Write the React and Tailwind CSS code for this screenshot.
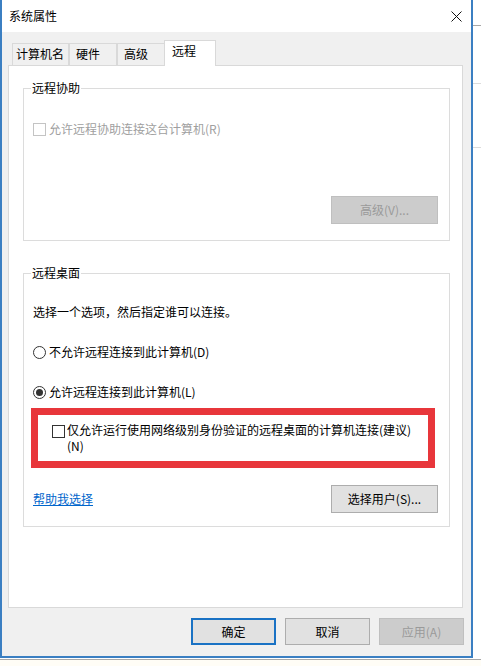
function Checkbox({ disabled }) {
  return (
    <span
      className={
        "inline-block w-[13px] h-[13px] border shrink-0 bg-white " +
        (disabled ? "border-[#c4c4c4]" : "border-[#333333]")
      }
    />
  );
}

function Radio({ checked }) {
  return (
    <span className="w-[13px] h-[13px] rounded-full border border-[#333333] bg-white flex items-center justify-center shrink-0">
      {checked && <span className="w-[7px] h-[7px] rounded-full bg-[#333333]" />}
    </span>
  );
}

export default function App() {
  return (
    <div className="w-[481px] h-[666px] bg-[#fffdf9] flex flex-col overflow-hidden font-['Noto_Sans_CJK_SC',sans-serif] text-[12px] leading-[16px] text-black">
      <div className="flex h-[658px]">
        {/* window */}
        <div className="w-[473px] h-full flex flex-col border-x-2 border-b-2 border-[#3b7fc2] bg-[#f0f0f0]">
          {/* title bar */}
          <div className="h-[32px] bg-white flex items-center justify-between pl-[7px] pr-[9px] shrink-0">
            <span>系统属性</span>
            <svg width="11" height="11" viewBox="0 0 11 11">
              <path d="M0.5 0.5L10.5 10.5M10.5 0.5L0.5 10.5" stroke="#111" strokeWidth="1" />
            </svg>
          </div>

          {/* tabs */}
          <div className="h-[34px] -mb-px flex items-end pl-[10px] relative z-10 shrink-0">
            <div className="w-[57px] h-[23px] border border-[#d9d9d9] bg-[#f0f0f0] pl-[3px] flex items-center pb-[1px]">计算机名</div>
            <div className="w-[48px] h-[23px] border border-[#d9d9d9] bg-[#f0f0f0] pl-[6px] flex items-center pb-[1px]">硬件</div>
            <div className="w-[47px] h-[23px] border border-[#d9d9d9] border-r-0 bg-[#f0f0f0] pl-[6px] flex items-center pb-[1px]">高级</div>
            <div className="w-[52px] h-[26px] border border-b-0 border-[#d9d9d9] bg-white pl-[7px] pt-[2px]">远程</div>
          </div>

          {/* panel */}
          <div className="ml-[6px] w-[455px] h-[543px] bg-white border border-[#d9d9d9] pl-[14px] shrink-0">
            {/* 远程协助 */}
            <fieldset className="w-[427px] mt-[14px] border border-[#dcdcdc] pb-[16px]">
              <legend className="ml-[7px] px-[1px]">远程协助</legend>
              <div className="mt-[25px] pl-[9px] flex items-center gap-[3px] text-[#a0a0a0]">
                <Checkbox disabled />
                <span>允许远程协助连接这台计算机(R)</span>
              </div>
              <div className="mt-[59px] pr-[11px] flex justify-end">
                <div className="w-[107px] h-[28px] bg-[#cccccc] border border-[#bfbfbf] text-[#9a9a9a] flex items-center justify-center">
                  高级(V)...
                </div>
              </div>
            </fieldset>

            {/* 远程桌面 */}
            <fieldset className="w-[427px] mt-[24px] border border-[#dcdcdc] pb-[13px]">
              <legend className="ml-[7px] px-[1px]">远程桌面</legend>
              <div className="mt-[23px] pl-[9px]">选择一个选项，然后指定谁可以连接。</div>
              <div className="mt-[24px] pl-[9px] flex items-center gap-[3px]">
                <Radio />
                <span>不允许远程连接到此计算机(D)</span>
              </div>
              <div className="mt-[24px] pl-[9px] flex items-center gap-[3px]">
                <Radio checked />
                <span>允许远程连接到此计算机(L)</span>
              </div>
              <div className="mt-[8px] ml-[7px] w-[404px] border-[7px] border-[#e8363b] bg-white pl-[14px] py-[7px] flex items-start gap-[2px]">
                <span className="mt-[3px]">
                  <Checkbox />
                </span>
                <span>
                  仅允许运行使用网络级别身份验证的远程桌面的计算机连接(建议)
                  <br />
                  (N)
                </span>
              </div>
              <div className="mt-[17px] pl-[9px] pr-[11px] flex items-center justify-between">
                <span className="text-[#0066cc] underline">帮助我选择</span>
                <div className="w-[107px] h-[28px] bg-[#e1e1e1] border border-[#adadad] flex items-center justify-center">
                  选择用户(S)...
                </div>
              </div>
            </fieldset>
          </div>

          {/* bottom buttons */}
          <div className="mt-[10px] pr-[7px] flex justify-end gap-[9px]">
            <div className="w-[85px] h-[27px] bg-[#e1e1e1] border-2 border-[#1a72c4] flex items-center justify-center">确定</div>
            <div className="w-[85px] h-[27px] bg-[#e1e1e1] border border-[#adadad] flex items-center justify-center">取消</div>
            <div className="w-[85px] h-[27px] bg-[#cccccc] border border-[#bfbfbf] text-[#9a9a9a] flex items-center justify-center">应用(A)</div>
          </div>
        </div>

        {/* background strip on the right */}
        <div className="flex-1 bg-white">
          <div className="h-[26px] border-b border-[#a8a8a8]" />
          <div className="h-[58px] border-b border-[#dcdcdc]" />
          <div className="h-[64px] border-b border-[#dcdcdc]" />
        </div>
      </div>
      <div className="h-[1px] bg-white" />
      <div className="h-[1px] bg-[#a8a8a8]" />
      <div className="flex-1 bg-[#fffdf6]" />
    </div>
  );
}
